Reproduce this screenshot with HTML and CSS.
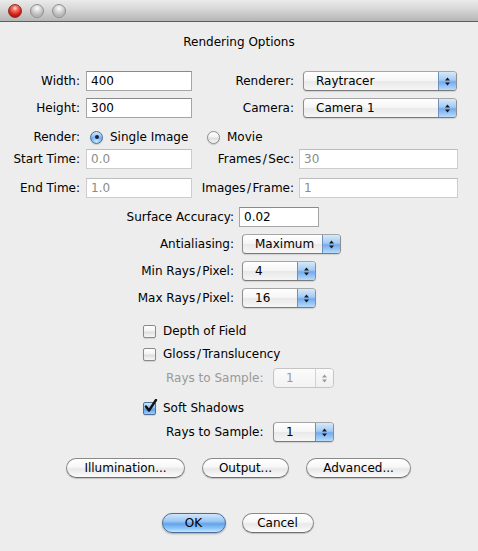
FILE: index.html
```html
<!DOCTYPE html>
<html>
<head>
<meta charset="utf-8">
<title>Rendering Options</title>
<link rel="stylesheet" href="styles.css">
</head>
<body>
<div class="titlebar">
  <span class="light red"></span><span class="light grey"></span><span class="light grey"></span>
</div>
<div class="title">Rendering Options</div>

<div class="grid-top">
  <div class="lbl">Width:</div>
  <div class="field">400</div>
  <div class="lbl">Renderer:</div>
  <div class="popup w-wide"><span class="val">Raytracer</span><span class="arrows"><svg width="7" height="9" viewBox="0 0 7 9"><path d="M3.5 0.5 L6 3.5 L1 3.5 Z M1 5.5 L6 5.5 L3.5 8.5 Z" fill="#1a1a1a"/></svg></span></div>

  <div class="lbl">Height:</div>
  <div class="field">300</div>
  <div class="lbl">Camera:</div>
  <div class="popup w-wide"><span class="val">Camera 1</span><span class="arrows"><svg width="7" height="9" viewBox="0 0 7 9"><path d="M3.5 0.5 L6 3.5 L1 3.5 Z M1 5.5 L6 5.5 L3.5 8.5 Z" fill="#1a1a1a"/></svg></span></div>

  <div class="lbl r-item">Render:</div>
  <div class="radio-item r-item first"><span class="radio on"></span><span>Single Image</span></div>
  <div class="radio-item r-item second"><span class="radio"></span><span>Movie</span></div>

  <div class="lbl">Start Time:</div>
  <div class="field disabled">0.0</div>
  <div class="lbl">Frames<span class="sl">/</span>Sec:</div>
  <div class="field disabled wide-field">30</div>

  <div class="lbl">End Time:</div>
  <div class="field disabled">1.0</div>
  <div class="lbl">Images<span class="sl">/</span>Frame:</div>
  <div class="field disabled wide-field">1</div>
</div>

<div class="grid-mid">
  <div class="lbl">Surface Accuracy:</div>
  <div class="field small-field">0.02</div>

  <div class="lbl">Antialiasing:</div>
  <div class="popup w-aa"><span class="val">Maximum</span><span class="arrows"><svg width="7" height="9" viewBox="0 0 7 9"><path d="M3.5 0.5 L6 3.5 L1 3.5 Z M1 5.5 L6 5.5 L3.5 8.5 Z" fill="#1a1a1a"/></svg></span></div>

  <div class="lbl">Min Rays<span class="sl">/</span>Pixel:</div>
  <div class="popup w-rays"><span class="val">4</span><span class="arrows"><svg width="7" height="9" viewBox="0 0 7 9"><path d="M3.5 0.5 L6 3.5 L1 3.5 Z M1 5.5 L6 5.5 L3.5 8.5 Z" fill="#1a1a1a"/></svg></span></div>

  <div class="lbl">Max Rays<span class="sl">/</span>Pixel:</div>
  <div class="popup w-rays"><span class="val">16</span><span class="arrows"><svg width="7" height="9" viewBox="0 0 7 9"><path d="M3.5 0.5 L6 3.5 L1 3.5 Z M1 5.5 L6 5.5 L3.5 8.5 Z" fill="#1a1a1a"/></svg></span></div>
</div>

<div class="checks">
  <div class="check-row row-dof"><span class="checkbox"></span><span>Depth of Field</span></div>
  <div class="check-row row-gloss"><span class="checkbox"></span><span>Gloss<span class="sl">/</span>Translucency</span></div>
  <div class="sample-row row-s1">
    <span class="lbl-s disabled-text">Rays to Sample:</span>
    <div class="popup w-sample disabled-popup"><span class="val">1</span><span class="arrows"><svg width="7" height="9" viewBox="0 0 7 9"><path d="M3.5 0.5 L6 3.5 L1 3.5 Z M1 5.5 L6 5.5 L3.5 8.5 Z" fill="#9a9a9a"/></svg></span></div>
  </div>
  <div class="check-row row-soft"><span class="checkbox on"><svg width="15" height="15" viewBox="0 0 15 15"><path d="M3 7.5 L6 11.5 L13 1" fill="none" stroke="#111" stroke-width="2.4" stroke-linecap="round" stroke-linejoin="round"/></svg></span><span>Soft Shadows</span></div>
  <div class="sample-row row-s2">
    <span class="lbl-s">Rays to Sample:</span>
    <div class="popup w-sample"><span class="val">1</span><span class="arrows"><svg width="7" height="9" viewBox="0 0 7 9"><path d="M3.5 0.5 L6 3.5 L1 3.5 Z M1 5.5 L6 5.5 L3.5 8.5 Z" fill="#1a1a1a"/></svg></span></div>
  </div>
</div>

<div class="buttons">
  <div class="btn b-illum">Illumination...</div>
  <div class="btn b-output">Output...</div>
  <div class="btn b-adv">Advanced...</div>
</div>

<div class="buttons final">
  <div class="btn default b-ok">OK</div>
  <div class="btn b-cancel">Cancel</div>
</div>
</body>
</html>
```

FILE: styles.css
```css
* { box-sizing: border-box; }
html, body { margin: 0; padding: 0; }
body {
  width: 478px;
  height: 551px;
  overflow: hidden;
  background: #ededed;
  font-family: "DejaVu Sans", "Noto Sans", sans-serif;
  font-size: 12px;
  color: #000;
}

/* slash in Lucida-style labels has wide side bearings */
.sl { margin: 0 1.5px; }

/* title bar */
.titlebar {
  height: 22px;
  background: linear-gradient(#ebebeb, #d6d6d6 45%, #b6b6b6 100%);
  border-bottom: 1px solid #5e5e5e;
  display: flex;
  align-items: center;
  gap: 8px;
  padding-left: 8px;
}
.light {
  width: 14px;
  height: 14px;
  border-radius: 50%;
}
.light.red {
  background: radial-gradient(circle at 50% 28%, #ffe0da 0, #f47a6c 22%, #d8251b 58%, #b6100a 80%, #e86050 100%);
  border: 1px solid #8e3026;
}
.light.grey {
  background: radial-gradient(circle at 50% 28%, #ffffff 0, #dcdcdc 30%, #b4b4b4 70%, #d2d2d2 100%);
  border: 1px solid #8f8f8f;
}

.title {
  text-align: center;
  margin-top: 12px;
  line-height: 16px;
}

/* top grid */
.grid-top {
  margin-top: 21px;
  display: grid;
  grid-template-columns: 86px 106px 108px 159px;
  grid-template-rows: 20px 27px 27px 24px 29px;
  align-items: end;
}
.lbl {
  text-align: right;
  padding-right: 6px;
  line-height: 20px;
  white-space: nowrap;
}
.field {
  height: 20px;
  background: #fff;
  border: 1px solid #a5a5a5;
  border-top-color: #8a8a8a;
  padding-left: 4px;
  line-height: 18px;
}
.field.disabled {
  color: #8c8c8c;
  border-color: #cdcdcd;
  border-top-color: #bdbdbd;
}
.r-item { line-height: 16px; height: 16px; }
.radio-item {
  display: flex;
  align-items: center;
  gap: 7px;
}
.radio-item.first { padding-left: 4px; }
.radio-item.second { padding-left: 15px; grid-column: span 2; }
.radio {
  width: 13px;
  height: 13px;
  border-radius: 50%;
  border: 1px solid #8a8a8a;
  background: linear-gradient(#ffffff, #f3f3f3 45%, #dedede 55%, #f7f7f7);
  box-shadow: 0 1px 1px rgba(0,0,0,0.15);
  position: relative;
  flex: none;
}
.radio.on {
  border-color: #4f6f98;
  background: radial-gradient(circle at 50% 85%, #c8ecff 0, #86bff3 35%, transparent 60%),
              linear-gradient(#d2e6fa, #8fbff1 45%, #5b9ce8 55%, #9bd0fb);
}
.radio.on::after {
  content: "";
  position: absolute;
  left: 3.5px;
  top: 3.5px;
  width: 4px;
  height: 4px;
  border-radius: 50%;
  background: #15233a;
}

/* popups */
.popup {
  height: 20px;
  margin-left: 3px;
  display: flex;
  align-items: stretch;
  border: 1px solid #8e8e8e;
  border-top-color: #a6a6a6;
  border-bottom-color: #7a7a7a;
  border-radius: 4px;
  background: linear-gradient(#ffffff, #f5f5f5 48%, #e9e9e9 52%, #f6f6f6);
  box-shadow: 0 1px 1px rgba(0,0,0,0.12);
  overflow: hidden;
}
.popup .val {
  flex: 1;
  padding-left: 12px;
  line-height: 18px;
  white-space: nowrap;
}
.popup .arrows {
  width: 18px;
  flex: none;
  display: flex;
  align-items: center;
  justify-content: center;
  border-left: 1px solid #6e90bf;
  background: linear-gradient(#d6e9fb, #a4caf3 45%, #74aaed 55%, #b7dcfc);
}
.popup.disabled-popup {
  border-color: #c4c4c4;
  background: linear-gradient(#fbfbfb, #f2f2f2);
  box-shadow: none;
}
.popup.disabled-popup .val { color: #9a9a9a; }
.popup.disabled-popup .arrows {
  border-left-color: #d2d2d2;
  background: linear-gradient(#fbfbfb, #f0f0f0);
}
.w-wide { width: 154px; }
.wide-field { width: 159px; margin-left: -1px; }

/* middle grid */
.grid-mid {
  margin-top: 9px;
  display: grid;
  grid-template-columns: 239px auto;
  grid-auto-rows: 20px;
  row-gap: 7px;
  justify-items: start;
}
.grid-mid .lbl { justify-self: stretch; padding-right: 5px; }
.small-field { width: 80px; }
.w-aa { width: 99px; }
.w-rays { width: 74px; }

/* checkboxes */
.checks {
  padding-left: 143px;
  display: flex;
  flex-direction: column;
}
.check-row {
  display: flex;
  align-items: center;
  gap: 7px;
  height: 18px;
}
.row-dof { margin-top: 14px; }
.row-gloss { margin-top: 5px; }
.row-soft { margin-top: 11px; }
.checkbox {
  width: 13px;
  height: 13px;
  border: 1px solid #8a8a8a;
  border-radius: 2px;
  background: linear-gradient(#ffffff, #f3f3f3 45%, #dedede 55%, #f7f7f7);
  box-shadow: 0 1px 1px rgba(0,0,0,0.12);
  position: relative;
  flex: none;
}
.checkbox.on {
  border-color: #4f6f98;
  background: linear-gradient(#d2e6fa, #8fbff1 45%, #5b9ce8 55%, #9bd0fb);
}
.checkbox svg {
  position: absolute;
  left: -1px;
  top: -4px;
}
.sample-row {
  display: flex;
  align-items: center;
  height: 20px;
  padding-left: 23px;
}
.row-s1 { margin-top: 5px; }
.row-s2 { margin-top: 5px; }
.lbl-s { width: 104px; white-space: nowrap; }
.disabled-text { color: #999; }
.w-sample { width: 61px; }

/* buttons */
.buttons {
  display: flex;
  justify-content: center;
  gap: 17px;
  margin-top: 16px;
  padding-right: 1px;
}
.buttons.final {
  margin-top: 35px;
  gap: 16px;
  padding-right: 3px;
}
.btn {
  height: 20px;
  line-height: 18px;
  text-align: center;
  border: 1px solid #8a8a8a;
  border-bottom-color: #6f6f6f;
  border-radius: 10px;
  background: linear-gradient(#ffffff, #f7f7f7 45%, #e8e8e8 55%, #fbfbfb);
  box-shadow: 0 1px 1px rgba(0,0,0,0.18);
  white-space: nowrap;
}
.btn.default {
  border-color: #4a6d9c;
  background: linear-gradient(#d0e6fc, #9ac7f4 40%, #64a3ec 55%, #8ec6f7 80%, #c6e8ff);
  box-shadow: 0 1px 2px rgba(0,0,0,0.3);
}
.b-illum { width: 119px; }
.b-output { width: 87px; }
.b-adv { width: 105px; }
.b-ok { width: 64px; }
.b-cancel { width: 72px; }
```
